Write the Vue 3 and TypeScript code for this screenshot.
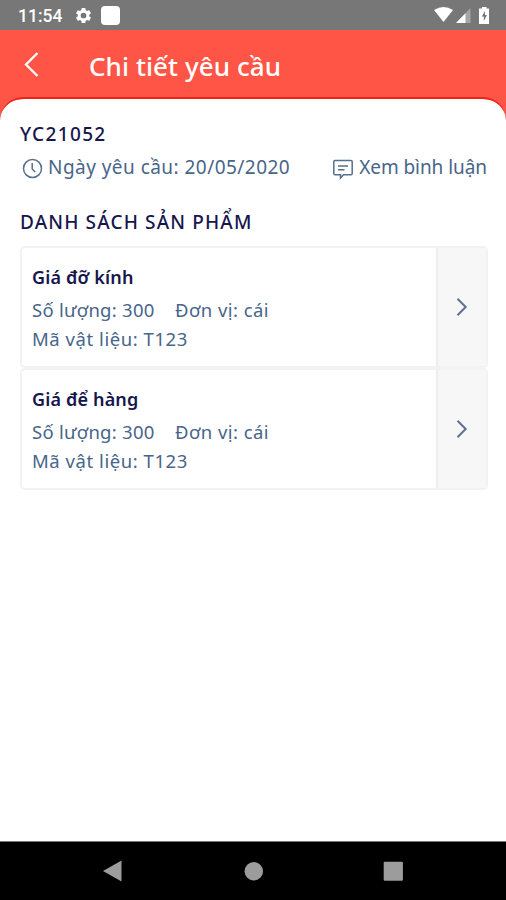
<script setup lang="ts">
interface Product {
  name: string
  quantity: number
  unit: string
  material: string
}

const products: Product[] = [
  { name: 'Giá đỡ kính', quantity: 300, unit: 'cái', material: 'T123' },
  { name: 'Giá để hàng', quantity: 300, unit: 'cái', material: 'T123' },
]
</script>

<template>
  <div class="screen">
    <div class="status">
      <span class="clock">11:54</span>
      <svg class="gear" viewBox="0 0 24 24" width="19" height="19">
        <path fill="#fff" fill-rule="evenodd" d="M19.14 12.94c.04-.3.06-.61.06-.94s-.02-.64-.07-.94l2.03-1.58a.49.49 0 0 0 .12-.61l-1.92-3.32a.49.49 0 0 0-.59-.22l-2.39.96a7 7 0 0 0-1.62-.94l-.36-2.54a.48.48 0 0 0-.48-.41h-3.84a.48.48 0 0 0-.47.41l-.36 2.54a7.4 7.4 0 0 0-1.62.94l-2.39-.96a.48.48 0 0 0-.59.22L2.74 8.87a.48.48 0 0 0 .12.61l2.03 1.58a6 6 0 0 0 0 1.88l-2.03 1.58a.49.49 0 0 0-.12.61l1.92 3.32c.12.22.37.29.59.22l2.39-.96c.5.38 1.03.7 1.62.94l.36 2.54c.05.24.24.41.48.41h3.84c.24 0 .44-.17.47-.41l.36-2.54a7 7 0 0 0 1.62-.94l2.39.96c.22.08.47 0 .59-.22l1.92-3.32a.48.48 0 0 0-.12-.61zM12 15.6a3.6 3.6 0 1 1 0-7.2 3.6 3.6 0 0 1 0 7.2z" />
      </svg>
      <span class="square"></span>
      <svg class="indicators" width="60" height="20" viewBox="0 0 60 20">
        <path fill="#fff" d="M0 5Q9.500 -1 19 5L9.500 17z" />
        <path fill="#a5a5a5" d="M36.500 3V18H22z" />
        <path fill="#fff" d="M31.500 8.200V18H22z" />
        <path fill="#fff" d="M48 3.500V2h4.500v1.500h2.500V19h-10V3.500H48z" />
        <path fill="#777" d="M51 6l-3.200 5.500h2v4.500l3.200-6h-2z" />
      </svg>
    </div>

    <header class="header">
      <svg class="back" width="20" height="28" viewBox="0 0 20 28">
        <path fill="none" stroke="#fff" stroke-width="2.300" d="M15.500 3L4 14.500L15.500 26" />
      </svg>
      <h1 class="title">Chi tiết yêu cầu</h1>
    </header>

    <div class="sheet-back">
      <main class="sheet">
        <div class="code"><span>YC21052</span></div>
        <div class="meta">
          <svg class="clock-icon" width="21" height="21" viewBox="0 0 21 21">
            <circle cx="10.500" cy="10.500" r="9" />
            <path d="M10.200 5v6l3 3" />
          </svg>
          <span class="date">Ngày yêu cầu: 20/05/2020</span>
          <svg class="comment-icon" width="22" height="22" viewBox="0 0 22 22">
            <path d="M3 2.500H19a1.200 1.200 0 0 1 1.200 1.200V15.500a1.200 1.200 0 0 1-1.200 1.200H11.500L8.500 20V16.700H3A1.200 1.200 0 0 1 1.800 15.500V3.700A1.200 1.200 0 0 1 3 2.500z" />
            <path d="M6 8H16M6 11.700H12.500" />
          </svg>
          <span class="comments">Xem bình luận</span>
        </div>

        <h2 class="section">DANH SÁCH SẢN PHẨM</h2>

        <article v-for="(p, i) in products" :key="i" class="card">
          <div class="info">
            <h3 class="name">{{ p.name }}</h3>
            <div class="line">
              <span class="qty">Số lượng: {{ p.quantity }}</span>
              <span class="unit">Đơn vị: {{ p.unit }}</span>
            </div>
            <div class="line"><span class="material">Mã vật liệu: {{ p.material }}</span></div>
          </div>
          <div class="open">
            <svg width="12" height="20" viewBox="0 0 12 20">
              <path fill="none" stroke="#5f7091" stroke-width="2" d="M1.500 1.800L9.700 10L1.500 18.200" />
            </svg>
          </div>
        </article>
      </main>
    </div>

    <nav class="nav">
      <svg width="22" height="22" viewBox="0 0 22 22"><path fill="#9c9c9c" d="M1 11L19.500 .5V21.500z" /></svg>
      <svg width="22" height="22" viewBox="0 0 22 22"><circle fill="#9c9c9c" cx="11.800" cy="11.300" r="9.200" /></svg>
      <svg width="22" height="22" viewBox="0 0 22 22"><rect fill="#9c9c9c" x="1.700" y="1.800" width="19.200" height="19" rx="1" /></svg>
    </nav>
  </div>
</template>

<style>
body {
  margin: 0;
}
</style>

<style scoped>
.screen {
  display: flex;
  flex-direction: column;
  width: 506px;
  height: 900px;
  overflow: hidden;
  background: #fff;
  font-family: "Noto Sans", sans-serif;
  color: #48658a;
}
.screen span,
.title,
.section,
.name {
  white-space: nowrap;
}
.status {
  display: flex;
  align-items: center;
  flex: none;
  height: 30px;
  padding: 0 15px 0 18px;
  box-sizing: border-box;
  background: #777;
}
.clock {
  width: 56px;
  font: 500 17.5px/30px Roboto, sans-serif;
  color: #fff;
  padding-top: 2px;
}
.gear {
  margin-top: 1px;
}
.square {
  width: 19px;
  height: 19px;
  margin-left: 8px;
  border-radius: 4px;
  background: #fff;
}
.indicators {
  margin-left: auto;
  margin-right: -3px;
}
.header {
  display: flex;
  align-items: center;
  flex: none;
  height: 67px;
  background: #ff5547;
  padding: 0 0 0 22px;
}
.back {
  margin-top: 1px;
}
.title {
  margin: 5px 0 0 47px;
  font-size: 26px;
  line-height: 36px;
  font-weight: 500;
  letter-spacing: 0.08px;
  color: #fff;
}
.sheet-back {
  flex: 1;
  background: linear-gradient(#ff5547, #ff5547) 0 0 / 100% 30px no-repeat;
}
.sheet {
  height: 100%;
  box-sizing: border-box;
  padding: 21px 19px 0 20px;
  border-top: 2px solid #ee2418;
  border-radius: 23px 23px 0 0;
  background: #fff;
  background-clip: padding-box;
}
.code {
  height: 28px;
  font-size: 19px;
  line-height: 28px;
  font-weight: 500;
  letter-spacing: 1.35px;
  color: #16164d;
}
.meta {
  display: flex;
  align-items: center;
  height: 32px;
  margin-top: 3px;
  font-size: 19px;
  line-height: 32px;
}
.meta svg {
  fill: none;
  stroke: #566f91;
  stroke-width: 1.5;
}
.clock-icon {
  margin: 3px 5px 0 2px;
}
.date {
  letter-spacing: 0.46px;
}
.comment-icon {
  margin: 3px 5px 0 auto;
}
.comments {
  letter-spacing: -0.06px;
}
.section {
  margin: 25px 0 10px;
  font-size: 19px;
  line-height: 28px;
  font-weight: 500;
  letter-spacing: 1.15px;
  color: #16164d;
}
.card {
  display: flex;
  height: 122px;
  margin-right: -1px;
  box-sizing: border-box;
  border: 2px solid #f2f2f2;
  border-radius: 5px;
  overflow: hidden;
}
.info {
  flex: 1;
  padding: 15px 0 0 10px;
}
.name {
  margin: 0 0 4px;
  font-size: 18px;
  line-height: 28px;
  font-weight: 600;
  letter-spacing: 0.15px;
  color: #16164d;
}
.line {
  display: flex;
  height: 29px;
  font-size: 18.5px;
  line-height: 29px;
}
.qty {
  width: 143px;
  letter-spacing: 0.27px;
}
.unit {
  letter-spacing: 0.45px;
}
.material {
  letter-spacing: 0.55px;
}
.open {
  display: flex;
  align-items: center;
  justify-content: center;
  width: 48px;
  border-left: 2px solid #eee;
  background: #f7f7f7;
}
.nav {
  display: flex;
  align-items: center;
  justify-content: space-between;
  flex: none;
  height: 59px;
  padding: 0 102px;
  box-sizing: border-box;
  background: #000;
  border-top: 1px solid #777;
}
</style>
